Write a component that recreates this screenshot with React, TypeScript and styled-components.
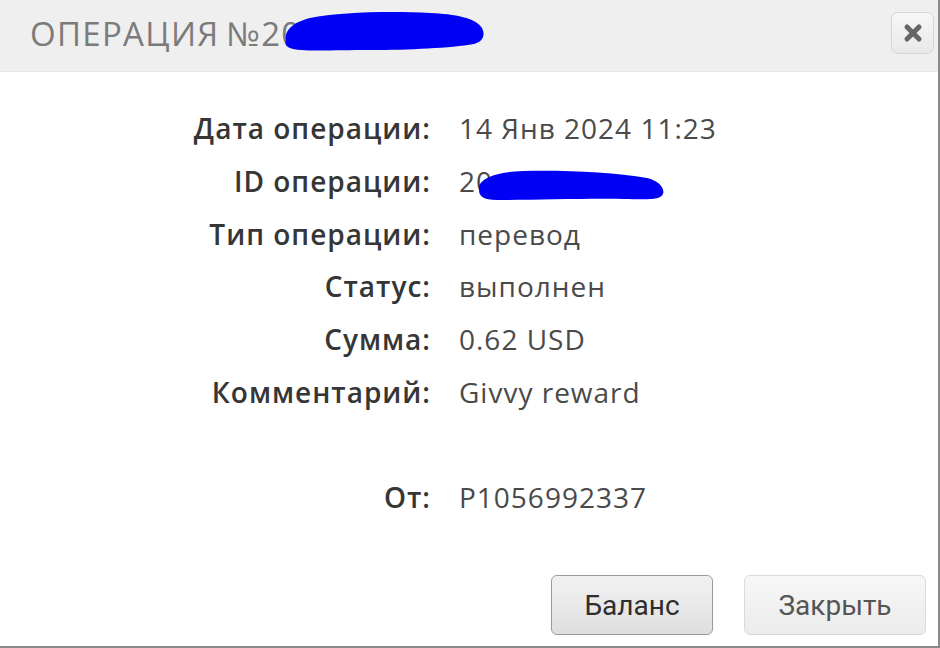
import React from "react";
import styled, { createGlobalStyle } from "styled-components";

const Global = createGlobalStyle`
  html, body { margin: 0; padding: 0; background: #fff; }
  body { width: 940px; height: 648px; overflow: hidden; }
`;

const Dialog = styled.div`
  box-sizing: border-box;
  width: 940px;
  height: 648px;
  border-right: 2px solid #8a8a8a;
  border-bottom: 2px solid #8a8a8a;
  display: flex;
  flex-direction: column;
  background: #fff;
`;

const Header = styled.div`
  position: relative;
  height: 72px;
  flex: none;
  background: #efefef;
  border-bottom: 1px solid #e6e6e6;
  box-sizing: border-box;
  display: flex;
  align-items: center;
  padding: 0 4px 0 30px;
`;

const Title = styled.div`
  flex: 1;
  font-family: "Open Sans", "Noto Sans", sans-serif;
  font-size: 33px;
  letter-spacing: 1.3px;
  word-spacing: -3px;
  color: #7b7b7b;
  margin-top: -4px;
`;

const Scribble = styled.svg`
  position: absolute;
  pointer-events: none;
`;

const CloseBtn = styled.button`
  width: 43px;
  height: 42px;
  margin-top: -6px;
  border: 1px solid #d6d6d6;
  border-radius: 7px;
  background: linear-gradient(#f7f7f7, #e9e9e9);
  display: flex;
  align-items: center;
  justify-content: center;
  padding: 0;
`;

const Body = styled.div`
  flex: 1;
  display: grid;
  grid-template-columns: 430px 1fr;
  grid-auto-rows: 52.7px;
  column-gap: 29px;
  align-content: start;
  padding-top: 30px;
`;

const Label = styled.div`
  justify-self: end;
  align-self: center;
  font-family: "Open Sans", "Noto Sans", sans-serif;
  font-weight: 600;
  font-size: 28px;
  letter-spacing: 1px;
  margin-right: -1px;
  color: #363636;
`;

const Value = styled.div`
  position: relative;
  align-self: center;
  font-family: "Open Sans", "Noto Sans", sans-serif;
  font-size: 28px;
  letter-spacing: 1px;
  color: #4a4a4a;
`;

const Spacer = styled.div`
  grid-column: 1 / -1;
`;

const Footer = styled.div`
  display: flex;
  justify-content: flex-end;
  gap: 31px;
  padding: 0 12px 11px 0;
`;

const Button = styled.button<{ $primary?: boolean }>`
  height: 60px;
  width: ${(p) => (p.$primary ? "162px" : "182px")};
  border-radius: 6px;
  border: 1px solid ${(p) => (p.$primary ? "#9a9a9a" : "#dadada")};
  background: ${(p) =>
    p.$primary
      ? "linear-gradient(#f1f1f1 0%, #e9e9e9 50%, #dedede 100%)"
      : "linear-gradient(#f7f7f7 0%, #f1f1f1 50%, #ececec 100%)"};
  font-family: Roboto, "Liberation Sans", sans-serif;
  font-size: 28px;
  color: ${(p) => (p.$primary ? "#2e2e2e" : "#555")};
  padding: 0;
`;

const rows: [string, string][] = [
  ["Дата операции:", "14 Янв 2024 11:23"],
  ["ID операции:", "20"],
  ["Тип операции:", "перевод"],
  ["Статус:", "выполнен"],
  ["Сумма:", "0.62 USD"],
  ["Комментарий:", "Givvy reward"],
];

export default function App() {
  return (
    <>
      <Global />
      <Dialog>
        <Header>
          <Title>ОПЕРАЦИЯ №20</Title>
          <Scribble
            width="212"
            height="48"
            viewBox="0 0 212 48"
            style={{ left: 280, top: 6 }}
          >
            <path
              d="M6 34 C 4 24, 14 16, 30 12 C 60 6, 110 5, 150 7 C 175 8, 196 12, 202 22 C 206 30, 202 36, 194 38 C 170 42, 130 44, 90 44 C 50 44, 20 46, 10 42 C 5 40, 5 37, 6 34 Z"
              fill="#0000f5"
            />
          </Scribble>
          <CloseBtn>
            <svg width="20" height="20" viewBox="0 0 20 20">
              <path
                d="M4 4 L16 16 M16 4 L4 16"
                stroke="#666"
                strokeWidth="5"
                strokeLinecap="round"
              />
            </svg>
          </CloseBtn>
        </Header>
        <Body>
          {rows.map(([l, v]) => (
            <React.Fragment key={l}>
              <Label>{l}</Label>
              <Value>
                {v}
                {l === "ID операции:" && (
                  <Scribble
                    width="196"
                    height="40"
                    viewBox="0 0 196 40"
                    style={{ left: 14, top: 2 }}
                  >
                    <path
                      d="M6 26 C 4 16, 20 8, 50 7 C 90 6, 140 8, 174 14 C 186 17, 192 24, 190 30 C 188 35, 178 36, 156 35 C 116 34, 60 36, 24 36 C 10 36, 6 32, 6 26 Z"
                      fill="#0000f5"
                    />
                  </Scribble>
                )}
              </Value>
            </React.Fragment>
          ))}
          <Spacer />
          <Label>От:</Label>
          <Value>P1056992337</Value>
        </Body>
        <Footer>
          <Button $primary>Баланс</Button>
          <Button>Закрыть</Button>
        </Footer>
      </Dialog>
    </>
  );
}
